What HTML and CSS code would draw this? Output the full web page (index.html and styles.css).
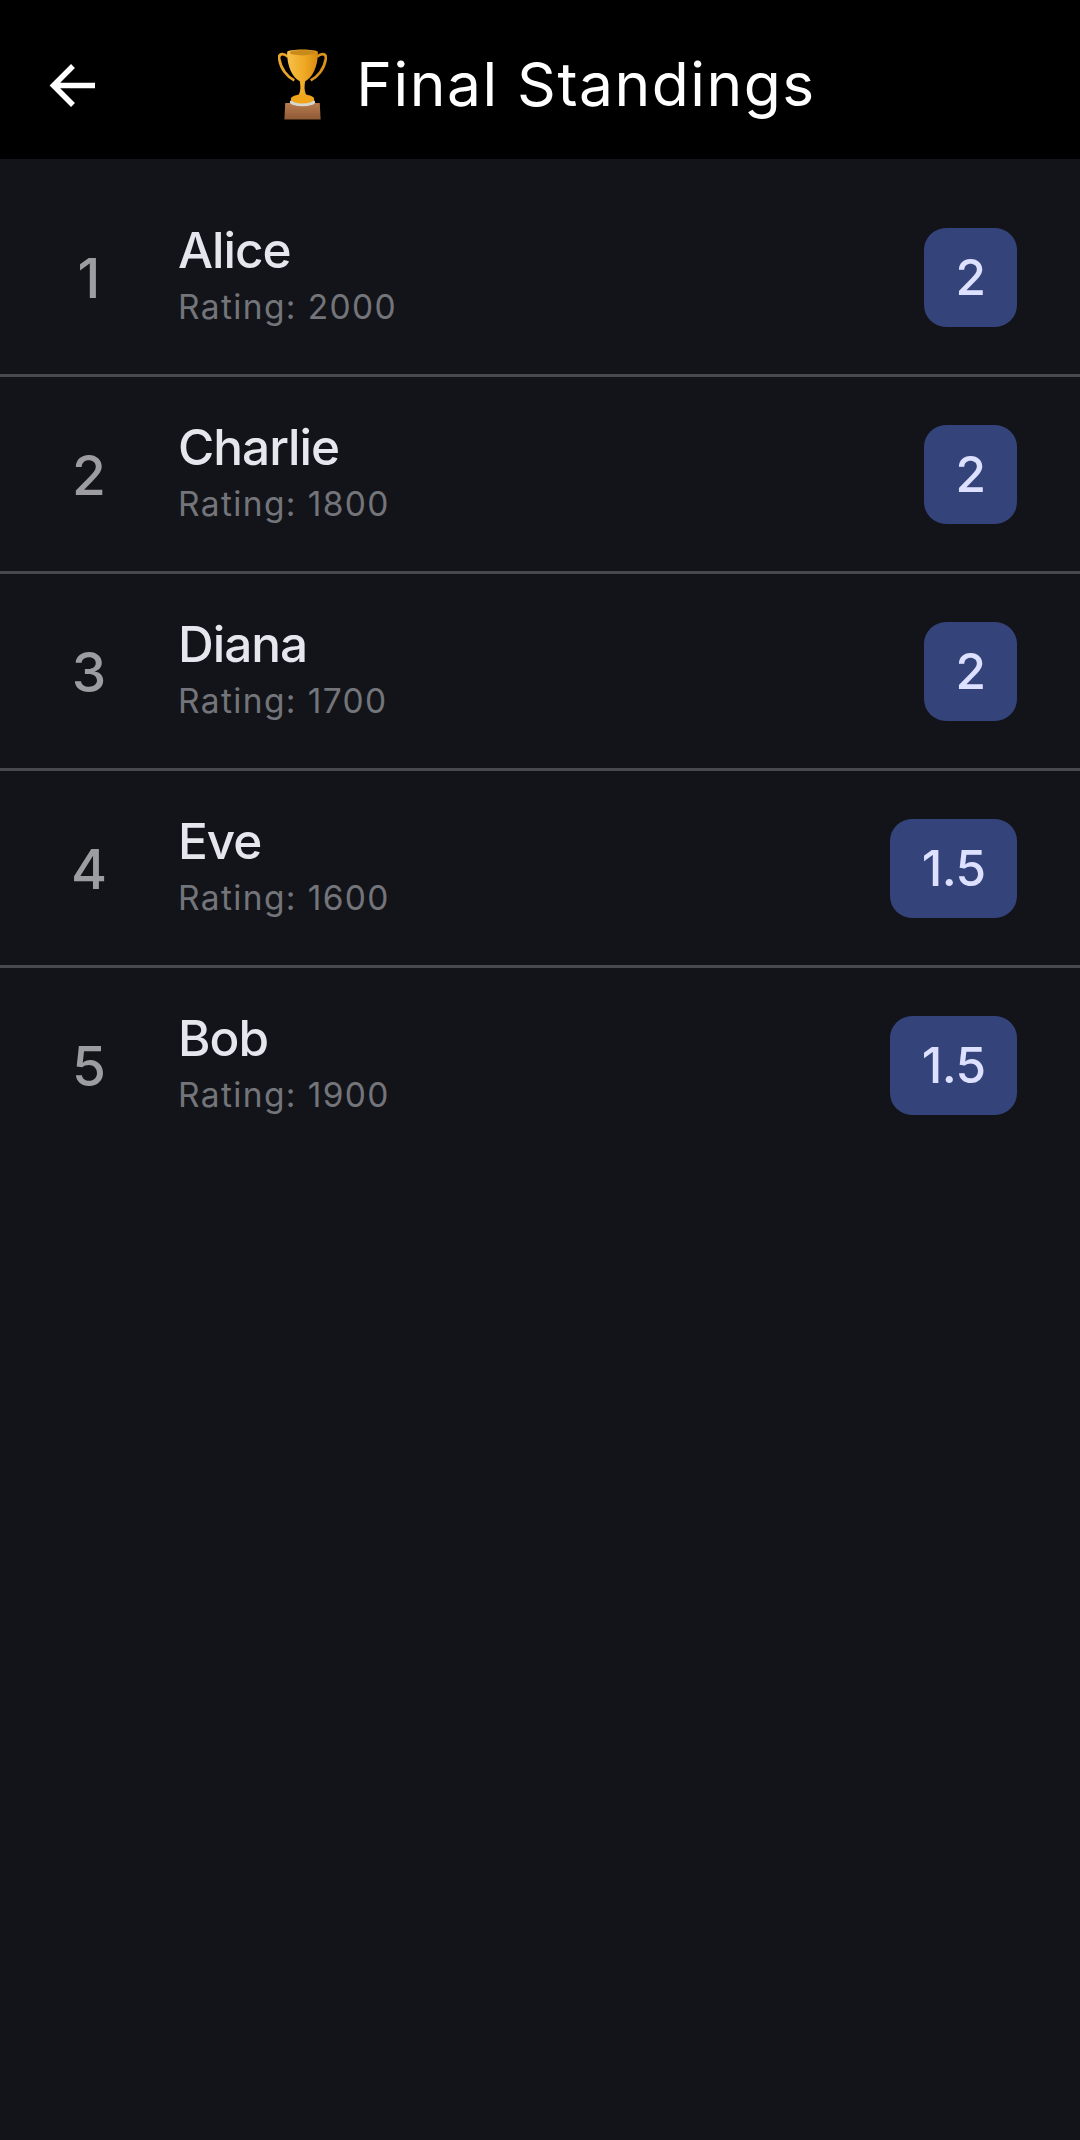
FILE: index.html
```html
<!DOCTYPE html>
<html lang="en">
<head>
<meta charset="utf-8">
<title>Final Standings</title>
<link rel="stylesheet" href="styles.css">
</head>
<body>
<header class="appbar">
  <button class="back" aria-label="Back">
    <svg width="66" height="66" viewBox="0 0 66 66" fill="none"><path d="M54 33.500H12M32 14L12.500 33.500L32 53" stroke="#fff" stroke-width="5.500"/></svg>
  </button>
  <h1 class="title">
    <svg class="trophy" width="49" height="72" viewBox="0 0 54 78">
      <defs>
        <linearGradient id="cup" x1="0" y1="0" x2="1" y2="0"><stop offset="0" stop-color="#f7c04a"/><stop offset=".55" stop-color="#efaa24"/><stop offset="1" stop-color="#d98a12"/></linearGradient>
        <linearGradient id="wood" x1="0" y1="0" x2="0" y2="1"><stop offset="0" stop-color="#b87b4e"/><stop offset="1" stop-color="#8f5a36"/></linearGradient>
      </defs>
      <path d="M11 9C5 4 0 6 1.500 12C3 22 10 31 18 35" fill="none" stroke="#e9a52a" stroke-width="3"/>
      <path d="M43 9C49 4 54 6 52.500 12C51 22 44 31 36 35" fill="none" stroke="#d9921c" stroke-width="3"/>
      <path d="M10 4C10 0 44 0 44 4C44 20 38 32 30 36C28.500 44 29 50 35 56H19C25 50 25.500 44 24 36C16 32 10 20 10 4Z" fill="url(#cup)"/>
      <ellipse cx="27" cy="4.500" rx="14" ry="3" fill="#c98a1c"/>
      <path d="M8 60H46L47 78H7Z" fill="url(#wood)"/>
      <ellipse cx="27" cy="59" rx="14" ry="4.500" fill="#d8d8d2"/>
      <ellipse cx="27" cy="55.500" rx="13" ry="5" fill="#f0a51a"/>
    </svg>
    <span>Final Standings</span>
  </h1>
</header>
<main class="list">
  <div class="row">
    <div class="rank">1</div>
    <div class="info"><div class="name">Alice</div><div class="rating">Rating: 2000</div></div>
    <div class="score">2</div>
  </div>
  <div class="row">
    <div class="rank">2</div>
    <div class="info"><div class="name">Charlie</div><div class="rating">Rating: 1800</div></div>
    <div class="score">2</div>
  </div>
  <div class="row">
    <div class="rank">3</div>
    <div class="info"><div class="name">Diana</div><div class="rating">Rating: 1700</div></div>
    <div class="score">2</div>
  </div>
  <div class="row">
    <div class="rank">4</div>
    <div class="info"><div class="name">Eve</div><div class="rating">Rating: 1600</div></div>
    <div class="score">1.5</div>
  </div>
  <div class="row">
    <div class="rank">5</div>
    <div class="info"><div class="name">Bob</div><div class="rating">Rating: 1900</div></div>
    <div class="score">1.5</div>
  </div>
</main>
</body>
</html>
```

FILE: styles.css
```css
* { box-sizing: border-box; }
html, body { margin: 0; height: 100%; }
body {
  background: #121419;
  font-family: Inter, "Liberation Sans", sans-serif;
  color: #e6e6ee;
  width: 1080px;
  height: 2140px;
  overflow: hidden;
}
.appbar {
  height: 159px;
  background: #000;
  display: flex;
  align-items: center;
  position: relative;
  justify-content: center;
}
.back {
  position: absolute;
  left: 41px;
  top: 52px;
  width: 66px;
  height: 66px;
  padding: 0;
  border: 0;
  background: none;
  display: block;
}
.back svg { display: block; }
.title {
  margin: 8px 0 0 14px;
  font-size: 60.5px;
  font-weight: 400;
  letter-spacing: 1.500px;
  color: #fff;
  display: flex;
  align-items: center;
  gap: 29px;
  line-height: 76px;
}
.trophy { display: block; flex: none; }
.list { padding-top: 21px; }
.row {
  height: 197px;
  padding: 0 63px 0 44px;
  display: flex;
  align-items: center;
  border-bottom: 3px solid #47494f;
}
.row:last-child { border-bottom-color: transparent; }
.rank {
  width: 90px;
  flex: none;
  text-align: center;
  font-size: 55px;
  font-weight: 500;
  color: #9c9ca1;
  margin: 2px 44px 0 0;
}
.info { flex: 1; min-width: 0; padding-top: 4px; }
.name {
  font-size: 49.500px;
  font-weight: 500;
  letter-spacing: -1px;
  line-height: 56px;
  color: #e6e6ee;
}
.rating {
  font-size: 33.500px;
  line-height: 58px;
  letter-spacing: 1.375px;
  color: #74757a;
}
.score {
  height: 99px;
  min-width: 92px;
  padding: 0 31.500px;
  display: flex;
  align-items: center;
  justify-content: center;
  background: #34437a;
  border-radius: 22px;
  font-size: 49.500px;
  font-weight: 500;
  letter-spacing: -0.600px;
  color: #dde1ff;
}
```
